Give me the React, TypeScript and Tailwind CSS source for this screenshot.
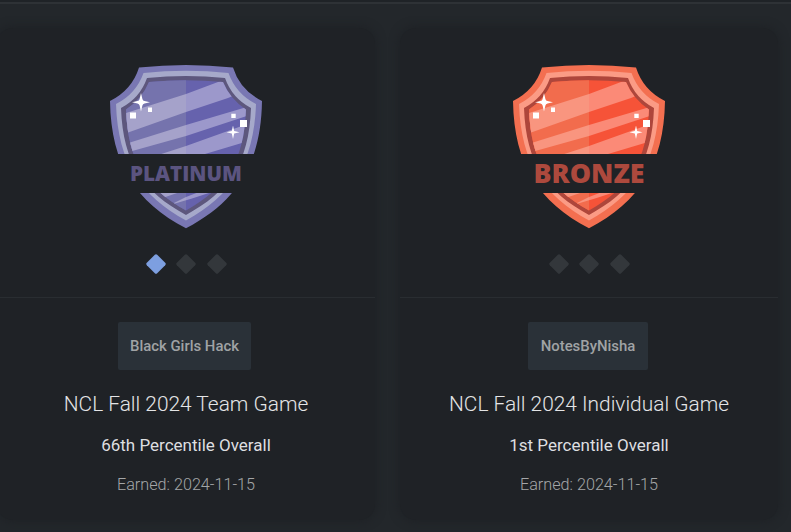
type Palette = {
  outer: string;
  rim: string;
  edge: string;
  left: string;
  right: string;
  stripeLeft: string;
  stripeRight: string;
  text: string;
};

const platinum: Palette = {
  outer: "#7977b3",
  rim: "#a6a9ca",
  edge: "#5d577d",
  left: "#7573ad",
  right: "#6662ad",
  stripeLeft: "#a5a2ca",
  stripeRight: "#9c98cb",
  text: "#5b5480",
};

const bronze: Palette = {
  outer: "#f36f50",
  rim: "#fb9b85",
  edge: "#ae463b",
  left: "#f26c4d",
  right: "#f65338",
  stripeLeft: "#f9957f",
  stripeRight: "#fb8a77",
  text: "#ad493d",
};

const INNER =
  "M49 27 Q86 23.5 123 27 Q130 44 146 54.5 C144 107 126 133 86 155.5 C46 133 28 107 26 54.5 Q42 44 49 27Z";

function Stripes({ fill }: { fill: string }) {
  return (
    <g fill={fill}>
      <path d="M20 60 L86 39 L118 27 L124 25 L134 40.5 L128 43 L86 57 L20 80.5Z" />
      <path d="M20 90.5 L86 70 L150 51 L150 60 L86 81 L20 99.5Z" />
      <path d="M52 102 L86 91 L150 68 L150 85.5 L95 102Z" />
      <path d="M55 137 H80 L64 142.5Z" />
      <path d="M70 150 L86 142 L99 137 H112 L92 143.5Z" />
    </g>
  );
}

function Shield({ id, label, size, colors: c }: { id: string; label: string; size: number; colors: Palette }) {
  return (
    <svg width="172" height="180" viewBox="0 0 172 180" className="shrink-0" role="img" aria-label={label}>
      <defs>
        <clipPath id={id + "-bands"}>
          <path d="M0 0H172V99H0Z M0 138H172V180H0Z" />
        </clipPath>
        <clipPath id={id + "-left"}>
          <path d="M0 0H86V180H0Z" />
        </clipPath>
        <clipPath id={id + "-inner"}>
          <path d={INNER} />
        </clipPath>
      </defs>
      <g clipPath={`url(#${id}-bands)`}>
        <path
          fill={c.outer}
          d="M39 12.5 Q86 7.5 133 12.5 Q140 35 162 46 C161 110 136 147 86 173.3 C36 147 11 110 10 46 Q32 35 39 12.5Z"
        />
        <path
          fill={c.rim}
          d="M43.5 18 Q86 13.5 128.5 18 Q136 39 156 49 C154 109 131 140 86 165.5 C41 140 18 109 16 49 Q36 39 43.5 18Z"
        />
        <path
          fill={c.edge}
          d="M47 23 Q86 19 125 23 Q132 43 151 53 C149 109 128 137 86 160 C44 137 23 109 21 53 Q40 43 47 23Z"
        />
        <g clipPath={`url(#${id}-inner)`}>
          <path fill={c.right} d="M0 0H172V180H0Z" />
          <Stripes fill={c.stripeRight} />
          <g clipPath={`url(#${id}-left)`}>
            <path fill={c.left} d="M0 0H86V180H0Z" />
            <Stripes fill={c.stripeLeft} />
          </g>
        </g>
        <g fill="#fff">
          <path d="M41 38 L42.4 44 Q42.8 45.8 44.5 46.1 L50 47.3 L44.5 48.5 Q42.8 48.8 42.4 50.5 L41 56.5 L39.6 50.5 Q39.2 48.8 37.5 48.5 L32 47.3 L37.5 46.1 Q39.2 45.8 39.6 44Z" />
          <path d="M133 70.5 L134.2 76 L139.5 77.2 L134.2 78.4 L133 84 L131.8 78.4 L126.5 77.2 L131.8 76Z" />
          <path d="M30 57.5H36V63.5H30Z M48 52.5H52V57H48Z M131.3 58.8H135.7V63H131.3Z M140 65H147V72H140Z" />
        </g>
      </g>
      <text
        x="86"
        y={size > 24 ? 128 : 126}
        textAnchor="middle"
        textLength={size > 24 ? 111 : 112}
        lengthAdjust="spacingAndGlyphs"
        fontSize={size}
        fontWeight="800"
        fill={c.text}
        className="font-['Open_Sans',sans-serif]"
      >
        {label}
      </text>
    </svg>
  );
}

function Diamond({ active }: { active: boolean }) {
  return (
    <svg width="20" height="20" viewBox="0 0 20 20" className={active ? "fill-[#7d9fe0]" : "fill-[#33373b]"}>
      <path d="M8.8 .8Q10 -.3 11.2 .8L19.2 8.8Q20.3 10 19.2 11.2L11.2 19.2Q10 20.3 8.8 19.2L.8 11.2Q-.3 10 .8 8.8Z" />
    </svg>
  );
}

type CardProps = {
  id: string;
  tier: string;
  size: number;
  colors: Palette;
  earned: number;
  team: string;
  tagClass: string;
  title: string;
  percentile: string;
};

function Card(p: CardProps) {
  return (
    <article className="flex w-[378px] shrink-0 flex-col items-center rounded-2xl bg-[#1f2226] shadow-[0_0_8px_2px_#1f2226]">
      <div className="flex h-[270px] w-full shrink-0 flex-col items-center border-b border-[#292d31] pt-[27px]">
        <Shield id={p.id} label={p.tier} size={p.size} colors={p.colors} />
        <div className="mt-[19px] flex gap-[10.5px]">
          {[0, 1, 2].map((i) => (
            <Diamond key={i} active={i < p.earned} />
          ))}
        </div>
      </div>
      <div className={`mt-6 flex h-12 shrink-0 items-center justify-center rounded-[2px] bg-[#2a3138] text-[14.9px] font-medium text-[#a0a3a5] ${p.tagClass}`}>
        {p.team}
      </div>
      <h2 className="mt-[18px] text-[20.9px] leading-8 font-light whitespace-nowrap text-[#e4e5e6]">{p.title}</h2>
      <p className="mt-[13px] text-[17px] leading-6 text-[#dedfe0]">{p.percentile}</p>
      <p className="mt-4 text-[16.2px] leading-6 font-light text-[#a4a6a8]">Earned: 2024-11-15</p>
    </article>
  );
}

export default function App() {
  return (
    <main className="h-[532px] w-[791px] overflow-hidden bg-[#23272b] font-[Roboto,sans-serif]">
      <div className="h-1 border-b-2 border-[#2e3236] bg-[#1f2327]" />
      <section className="-ml-[3px] flex h-[516px] gap-[25px] pt-6">
        <Card
          id="platinum"
          tier="PLATINUM"
          size={21}
          colors={platinum}
          earned={1}
          team="Black Girls Hack"
          tagClass="w-[133px] -ml-[3px]"
          title="NCL Fall 2024 Team Game"
          percentile="66th Percentile Overall"
        />
        <Card
          id="bronze"
          tier="BRONZE"
          size={27}
          colors={bronze}
          earned={0}
          team="NotesByNisha"
          tagClass="w-[120px] -ml-[2px]"
          title="NCL Fall 2024 Individual Game"
          percentile="1st Percentile Overall"
        />
      </section>
    </main>
  );
}
